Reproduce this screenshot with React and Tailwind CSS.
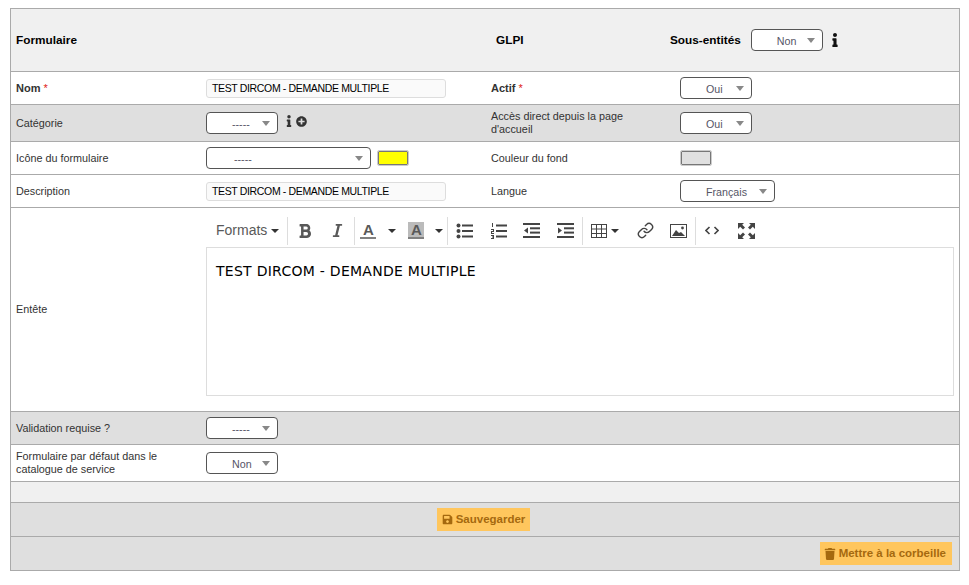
import React from 'react';
import { FaInfo, FaPlusCircle, FaSave, FaTrash, FaBold, FaItalic } from 'react-icons/fa';
import { Link as LinkIcon } from 'lucide-react';

const ROW = 'grid grid-cols-[195px_285px_189px_1fr] items-center border-b border-[#aaaaaa] text-[10.8px] leading-[13px] text-[#333333]';

function FakeSelect({ value, width = 'w-[72px]', textPad = 'pl-[25px]' }) {
  return (
    <div className={`flex h-[22px] items-center justify-between rounded-[4px] border border-[#555555] bg-white pr-[7px] text-[10.7px] text-[#555566] ${width} ${textPad}`}>
      <span className="pt-[2px]">{value}</span>
      <span className="h-0 w-0 border-x-[4px] border-t-[5px] border-x-transparent border-t-[#888888]" />
    </div>
  );
}

function TextField() {
  return (
    <div className="flex h-[19px] w-[240px] items-center rounded-[3px] border border-[#dddddd] bg-[#fafafa] pl-[5px] text-[10.5px] tracking-[-0.35px] text-black">
      TEST DIRCOM - DEMANDE MULTIPLE
    </div>
  );
}

function Swatch({ color }) {
  return <div className={`ml-[1px] h-[14px] w-[30px] rounded-[1px] border border-[#777777] outline outline-1 outline-[#cccccc] ${color}`} />;
}

function Req() {
  return <span className="font-normal text-[#e02020]"> *</span>;
}

function Caret({ className = '' }) {
  return <span className={`h-0 w-0 border-x-[4px] border-t-[4px] border-x-transparent border-t-[#333333] ${className}`} />;
}

function Sep() {
  return <span className="h-[28px] w-px shrink-0 bg-[#dddddd]" />;
}

function Glyph({ children, w = 'w-[34px]' }) {
  return <span className={`flex h-[28px] shrink-0 items-center justify-center text-[#595959] ${w}`}>{children}</span>;
}

function ListBullets() {
  return (
    <svg width="17" height="16" viewBox="0 0 17 16" fill="#444">
      <circle cx="2.5" cy="2.5" r="2" /><circle cx="2.5" cy="8" r="2" /><circle cx="2.5" cy="13.5" r="2" />
      <rect x="6" y="1.5" width="11" height="2" /><rect x="6" y="7" width="11" height="2" /><rect x="6" y="12.5" width="11" height="2" />
    </svg>
  );
}

function ListNumbers() {
  return (
    <svg width="17" height="16" viewBox="0 0 17 16" fill="#444">
      <path d="M2 0h1v4H2zM1 6h3v1H1zM3 7h1v1H3zM1 8h3v1H1zM1 9h1v1H1zM1 10h3v1H1zM1 12h3v1H1zM3 13h1v2H3zM2 13.5h1v1H2zM1 15h3v1H1z" />
      <rect x="6" y="1.5" width="11" height="2" /><rect x="6" y="7" width="11" height="2" /><rect x="6" y="12.5" width="11" height="2" />
    </svg>
  );
}

function Indent({ flip }) {
  return (
    <svg width="17" height="15" viewBox="0 0 17 15" fill="#444">
      <rect x="0" y="0" width="17" height="2" /><rect x="7" y="4.3" width="10" height="2" /><rect x="7" y="8.6" width="10" height="2" /><rect x="0" y="13" width="17" height="2" />
      {flip ? <polygon points="1,7.5 5,4.5 5,10.5" /> : <polygon points="5,7.5 1,4.5 1,10.5" />}
    </svg>
  );
}

function TableIcon() {
  return (
    <svg width="16" height="14" viewBox="0 0 16 14" fill="none" stroke="#444" strokeWidth="1">
      <rect x="0.5" y="0.5" width="15" height="13" />
      <path d="M0 5h16M0 9.5h16M5.5 0v14M10.5 0v14" />
    </svg>
  );
}

function ImageIcon() {
  return (
    <svg width="17" height="14" viewBox="0 0 17 14">
      <rect x="0.5" y="0.5" width="16" height="13" fill="none" stroke="#444" />
      <path d="M2 12l4-6 3 3 2-1 4 4z" fill="#444" />
      <circle cx="12.5" cy="4" r="1.4" fill="#444" />
    </svg>
  );
}

function CodeIcon() {
  return (
    <svg width="14" height="9" viewBox="0 0 14 9" fill="none" stroke="#444" strokeWidth="1.6">
      <path d="M4.5 1L1 4.5 4.5 8M9.5 1L13 4.5 9.5 8" />
    </svg>
  );
}

function FullscreenIcon() {
  return (
    <svg width="17" height="16" viewBox="0 0 17 16" fill="#444">
      <path d="M0 0h6L4.2 1.8 7 4.6 5 6.5 2.2 3.7 0 6zM17 0h-6l1.8 1.8L10 4.6l2 1.9 2.8-2.8L17 6zM0 16h6l-1.8-1.8L7 11.4l-2-1.9-2.8 2.8L0 10zM17 16h-6l1.8-1.8-2.8-2.8 2-1.9 2.8 2.8L17 10z" />
    </svg>
  );
}

function ColorA({ backdrop, className = '' }) {
  return (
    <span className={`flex h-[17px] w-[16px] flex-col items-center justify-center border-b-[2px] border-[#808080] text-[15px] leading-[15px] font-bold text-[#595959] ${backdrop ? 'bg-[#bbbbbb]' : ''} ${className}`}>
      A
    </span>
  );
}

function Toolbar() {
  return (
    <div className="flex h-[39px] items-center pt-[6px]">
      <span className="flex items-center gap-[4px] pl-[10px] pr-[8px] text-[14px] text-[#595959]">Formats <Caret /></span>
      <Sep />
      <Glyph w="w-[33px]"><FaBold size={16} /></Glyph>
      <Glyph w="w-[33px]"><FaItalic size={15} /></Glyph>
      <Sep />
      <ColorA className="ml-[5px]" />
      <Caret className="ml-[12px]" />
      <ColorA backdrop className="ml-[12px]" />
      <Caret className="ml-[11px] mr-[4px]" />
      <Sep />
      <Glyph w="w-[33px]"><ListBullets /></Glyph>
      <Glyph><ListNumbers /></Glyph>
      <Glyph w="w-[33px]"><Indent flip /></Glyph>
      <Glyph><Indent /></Glyph>
      <Sep />
      <span className="flex w-[46px] shrink-0 items-center gap-[4px] pl-[8px]"><TableIcon /><Caret /></span>
      <Glyph w="w-[32px]"><LinkIcon size={17} strokeWidth={2} className="text-[#444444]" /></Glyph>
      <Glyph><ImageIcon /></Glyph>
      <Sep />
      <Glyph w="w-[32px]"><CodeIcon /></Glyph>
      <Glyph w="w-[36px]"><FullscreenIcon /></Glyph>
    </div>
  );
}

function ActionButton({ icon, children, className = 'px-[5px]' }) {
  return (
    <button className={`flex h-[23px] items-center bg-[#ffc65d] text-[11.5px] font-bold text-[#a5690f] ${className}`}>
      {icon}
      {children}
    </button>
  );
}

export default function App() {
  return (
    <div className="h-[585px] w-[969px] bg-white pt-[8px] pl-[10px] font-['Liberation_Sans',Arial,sans-serif]">
      <div className="w-[950px] border border-[#aaaaaa]">
        <div className={`${ROW} h-[63px] bg-[#f0f0f0] text-[11.8px] font-bold text-black`}>
          <span className="pl-[5px]">Formulaire</span>
          <span />
          <span className="pl-[5px]">GLPI</span>
          <div className="col-start-4 -ml-[10px] flex items-center">
            <span>Sous-entités</span>
            <span className="ml-[10px] font-normal"><FakeSelect value="Non" /></span>
            <FaInfo size={14} className="ml-[5px] text-[#111111]" />
          </div>
        </div>

        <div className={`${ROW} h-[33px]`}>
          <span className="pl-[5px] text-[11px] font-bold">Nom<Req /></span>
          <TextField />
          <span className="text-[11px] font-bold">Actif<Req /></span>
          <FakeSelect value="Oui" />
        </div>

        <div className={`${ROW} h-[37px] bg-[#dfdfdf]`}>
          <span className="pl-[5px]">Catégorie</span>
          <div className="flex items-center">
            <FakeSelect value="-----" />
            <FaInfo size={12} className="ml-[5px] mb-[4px] text-[#333333]" />
            <FaPlusCircle size={11} className="ml-[1px] mb-[4px] text-[#333333]" />
          </div>
          <span className="pr-[30px]">Accès direct depuis la page d'accueil</span>
          <FakeSelect value="Oui" />
        </div>

        <div className={`${ROW} h-[33px]`}>
          <span className="pl-[5px]">Icône du formulaire</span>
          <div className="flex items-center gap-[6px]">
            <FakeSelect value="-----" width="w-[165px]" textPad="pl-[27px]" />
            <Swatch color="bg-[#ffff00]" />
          </div>
          <span>Couleur du fond</span>
          <Swatch color="bg-[#e0e0e0]" />
        </div>

        <div className={`${ROW} h-[33px]`}>
          <span className="pl-[5px]">Description</span>
          <TextField />
          <span>Langue</span>
          <FakeSelect value="Français" width="w-[95px]" />
        </div>

        <div className={`${ROW} h-[204px]`}>
          <span className="pl-[5px]">Entête</span>
          <div className="col-span-3 flex h-full flex-col pr-[5px]">
            <Toolbar />
            <div className="h-[149px] border border-[#dddddd] px-[9px] py-[15px] font-['DejaVu_Sans',sans-serif] text-[14px] leading-[16px] tracking-[0.27px] text-black">
              TEST DIRCOM - DEMANDE MULTIPLE
            </div>
          </div>
        </div>

        <div className={`${ROW} h-[33px] bg-[#dfdfdf]`}>
          <span className="pl-[5px]">Validation requise ?</span>
          <FakeSelect value="-----" />
        </div>

        <div className={`${ROW} h-[37px]`}>
          <span className="pl-[5px] pr-[10px]">Formulaire par défaut dans le catalogue de service</span>
          <FakeSelect value="Non" />
        </div>

        <div className="h-[21px] border-b border-[#aaaaaa] bg-[#f0f0f0]" />

        <div className="flex h-[34px] items-center justify-center border-b border-[#aaaaaa] bg-[#dfdfdf] pr-[3px]">
          <ActionButton icon={<FaSave size={11} className="mr-[3px]" />}>Sauvegarder</ActionButton>
        </div>

        <div className="flex h-[33px] items-center justify-end bg-[#dfdfdf] pr-[7px]">
          <ActionButton className="pl-[4px] pr-[6px]" icon={<FaTrash size={12} className="mr-[3px]" />}>Mettre à la corbeille</ActionButton>
        </div>
      </div>
    </div>
  );
}
